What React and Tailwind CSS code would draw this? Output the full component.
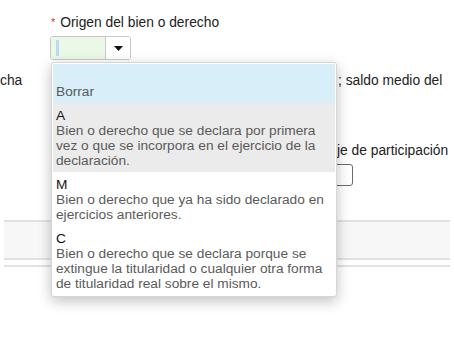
import { useState } from "react";

const options = [
  { code: "", desc: "Borrar" },
  { code: "A", desc: "Bien o derecho que se declara por primera vez o que se incorpora en el ejercicio de la declaración." },
  { code: "M", desc: "Bien o derecho que ya ha sido declarado en ejercicios anteriores." },
  { code: "C", desc: "Bien o derecho que se declara porque se extingue la titularidad o cualquier otra forma de titularidad real sobre el mismo." },
];

export default function App() {
  const [active] = useState(0);
  const [hover] = useState(1);

  return (
    <div className="relative w-[454px] h-[338px] overflow-hidden bg-white text-[13.8px] leading-[15px] text-[#222] font-['Liberation_Sans',Arial,sans-serif]">
      {/* page underneath */}
      <div className="pt-[15px]">
        <div className="flex items-center pl-[51px] h-[15px]">
          <span className="text-[#e0312b] text-[11px] mr-[5px]">*</span>
          <span>Origen del bien o derecho</span>
        </div>

        <div className="ml-[50px] mt-[6px] flex w-[81px] h-[24px] rounded-[3px] border border-[#c8c8c8] overflow-hidden">
          <div className="flex-1 bg-[#ebf8e6] flex items-center pl-[5px]">
            <div className="w-[3px] h-[16px] bg-[#b9dcf2]" />
          </div>
          <div className="w-[25px] border-l border-[#c8c8c8] bg-white flex items-center justify-center">
            <svg width="9" height="5" viewBox="0 0 9 5"><path d="M0 0h9L4.5 5z" fill="#111" /></svg>
          </div>
        </div>

        <div className="mt-[13px] flex h-[15px] whitespace-nowrap">
          <span className="w-[338px] shrink-0">cha</span>
          <span>; saldo medio del</span>
        </div>

        <div className="mt-[55px] flex h-[15px] whitespace-nowrap">
          <span className="ml-[337px]">je de participación</span>
        </div>
        <div className="mt-[6px] ml-[330px] w-[23px] h-[22px] rounded-[3px] border border-[#6b6b6b]" />

        <div className="mt-[34px] mx-[4px] h-[40px] bg-[#f7f7f7] border-y-[2px] border-[#e2e2e2]" />
        <div className="mt-[5px] mx-[4px] h-[2px] bg-[#e2e2e2]" />
      </div>

      {/* open dropdown */}
      <div className="absolute left-[51px] top-[62px] w-[286px] bg-white rounded-[3px] border border-[#d6d6d6] p-[1px] text-[13.7px] shadow-[0_4px_14px_rgba(0,0,0,0.25)]">
        {options.map((o, i) => (
          <div
            key={i}
            className={
              "pl-[3px] pr-[2px] pt-[5px] pb-[4px] " +
              (i === active ? "bg-[#d8eef9] pb-[3px] " : i === hover ? "bg-[#ebebeb] " : "")
            }
          >
            <div className="h-[15px] text-[#111]">{o.code}</div>
            <div className="text-[#5a5a5a]">{o.desc}</div>
          </div>
        ))}
      </div>
    </div>
  );
}
